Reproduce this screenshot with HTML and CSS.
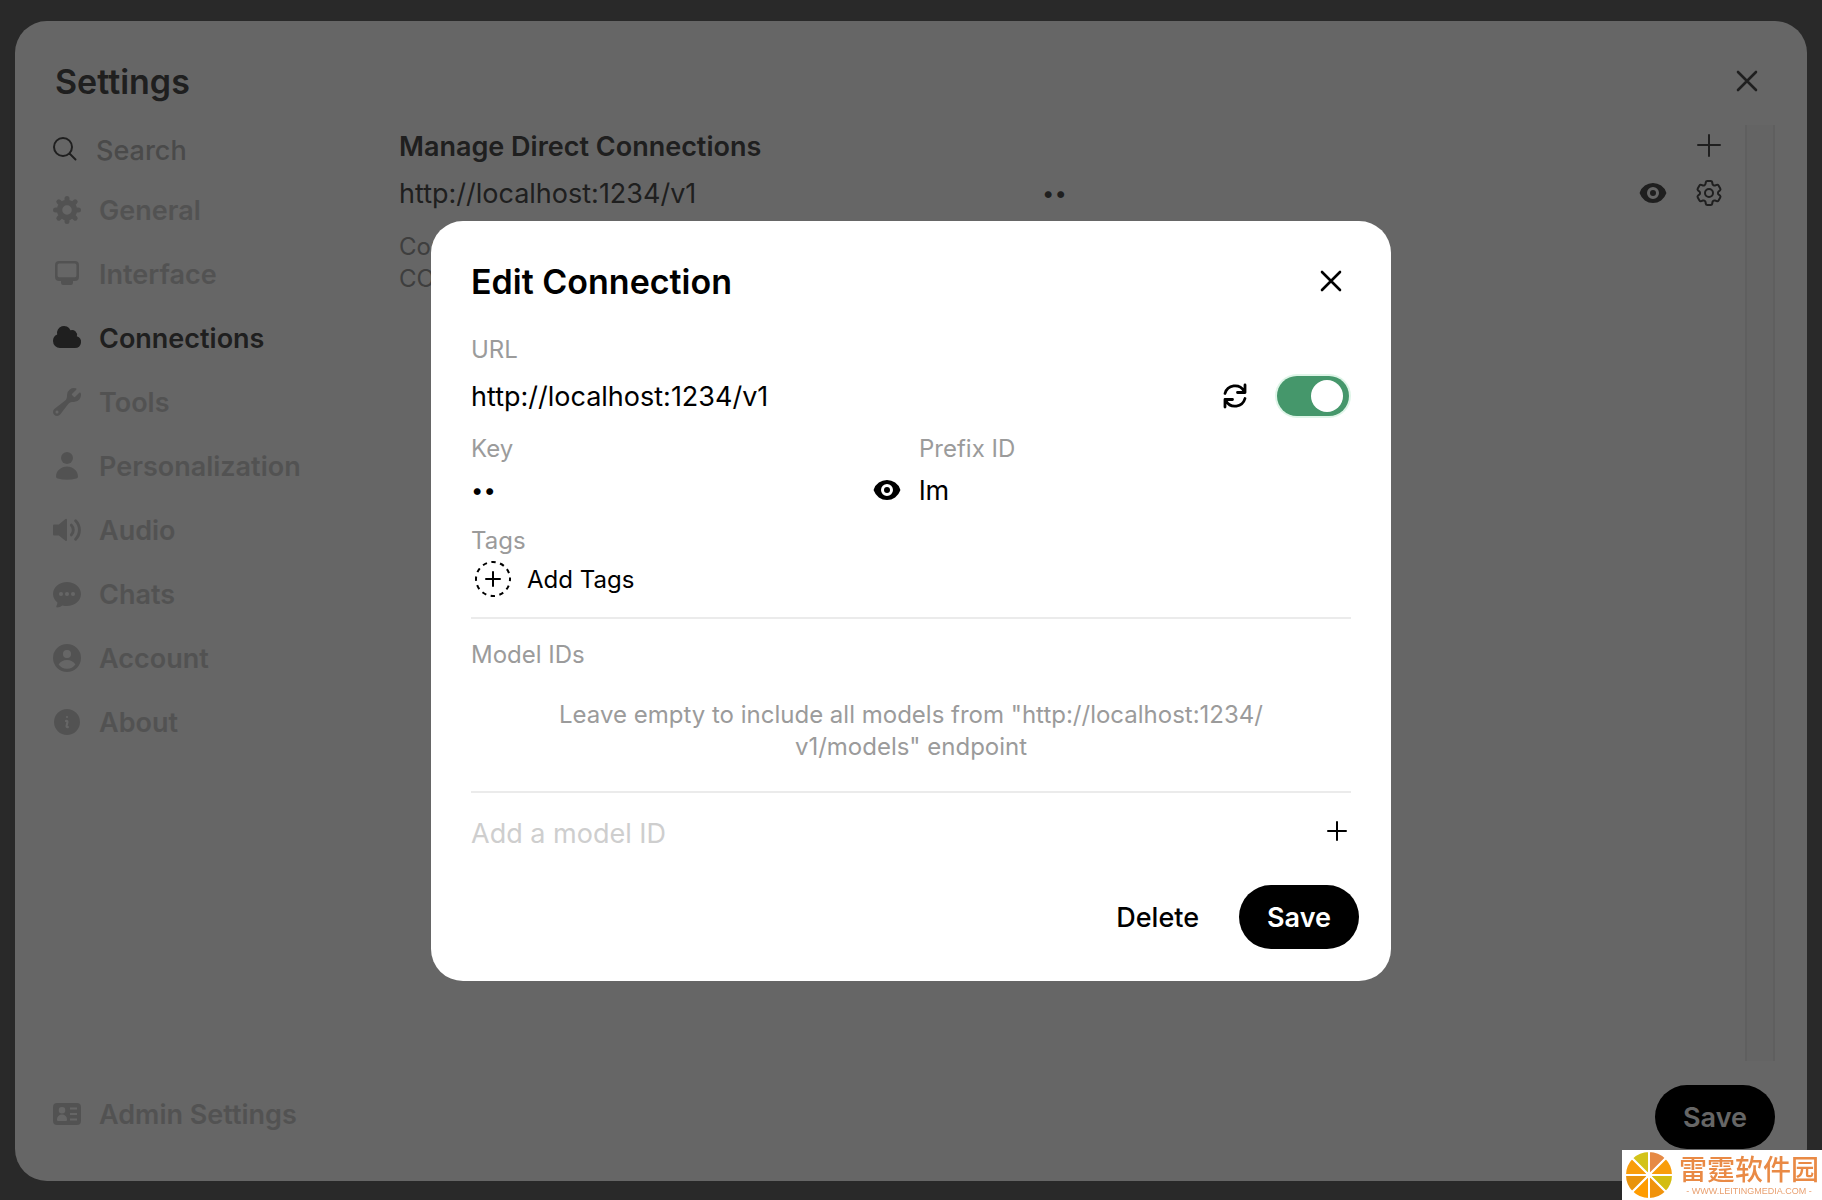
FILE: index.html
```
<!DOCTYPE html>
<html lang="en">
<head>
    <meta charset="UTF-8">
    <meta name="viewport" content="width=device-width, initial-scale=1.0">
    <title>Settings</title>
    <link rel="stylesheet" href="styles.css">
</head>
<body>

    <div class="settings">
        <header class="settings-header">
            <h1>Settings</h1>
            <button type="button" class="icon-button" aria-label="Close settings">
                <svg class="icon" viewBox="0 0 32 32"><path class="line-mid" d="M7 7l18 18M25 7L7 25"/></svg>
            </button>
        </header>

        <div class="settings-body">
            <nav class="sidebar">
                <label class="search">
                    <svg class="icon" viewBox="0 0 32 32"><circle class="line" cx="12" cy="13" r="9"/><path class="line" d="M18.5 19.5l6 6"/></svg>
                    <input type="text" placeholder="Search" aria-label="Search">
                </label>
                <button type="button" class="tab">
                    <svg class="icon" viewBox="0 0 32 32"><circle cx="16" cy="16" r="7.5" fill="none" stroke="currentColor" stroke-width="5.5"/><path d="M16 7.5V4.5M16 27.5v-3M7.5 16h-3M27.5 16h-3M10 10L7.8 7.8M24.2 24.2L22 22M10 22l-2.2 2.2M24.2 7.8L22 10" fill="none" stroke="currentColor" stroke-width="5" stroke-linecap="round"/></svg>
                    General
                </button>
                <button type="button" class="tab">
                    <svg class="icon" viewBox="0 0 16 16"><path fill-rule="evenodd" d="M4 1.5a2 2 0 0 0-2 2v6a2 2 0 0 0 2 2h1v1a1 1 0 0 0 1 1h4a1 1 0 0 0 1-1v-1h1a2 2 0 0 0 2-2v-6a2 2 0 0 0-2-2H4Zm-.7 2.1a.8.8 0 0 1 .8-.8h7.800a.8.8 0 0 1 .8.8v5.200a.8.8 0 0 1-.8.8H4.100a.8.8 0 0 1-.8-.8V3.600Z"/></svg>
                    Interface
                </button>
                <button type="button" class="tab active">
                    <svg class="icon" viewBox="0 0 16 16"><path d="M1 9.5A3.5 3.5 0 0 0 4.500 13H12a3 3 0 0 0 .917-5.857 2.503 2.503 0 0 0-3.198-3.019 3.5 3.5 0 0 0-6.628 2.171A3.5 3.5 0 0 0 1 9.5Z"/></svg>
                    Connections
                </button>
                <button type="button" class="tab">
                    <svg class="icon" viewBox="0 0 16 16"><path fill-rule="evenodd" d="M11.5 8a3.5 3.5 0 0 0 3.362-4.476c-.094-.325-.497-.39-.736-.15L12.099 5.4a.48.48 0 0 1-.653.033 8.554 8.554 0 0 1-.879-.879.48.48 0 0 1 .033-.653l2.027-2.028c.24-.239.175-.642-.15-.736a3.502 3.502 0 0 0-4.476 3.427c.018.99-.133 2.093-.914 2.7l-5.31 4.13a2.015 2.015 0 1 0 2.828 2.827l4.13-5.309c.607-.78 1.71-.932 2.7-.914L11.5 8ZM3 13.75a.75.75 0 1 0 0-1.5.75.75 0 0 0 0 1.5Z"/></svg>
                    Tools
                </button>
                <button type="button" class="tab">
                    <svg class="icon" viewBox="0 0 16 16"><circle cx="8" cy="4" r="3"/><path d="M8 8.2c-3 0-5.5 2.2-5.5 5 0 .5.3.9.8 1 3 .9 6.4.9 9.4 0 .5-.1.8-.5.8-1 0-2.8-2.5-5-5.5-5Z"/></svg>
                    Personalization
                </button>
                <button type="button" class="tab">
                    <svg class="icon" viewBox="0 0 16 16"><path d="M7.600 2.400A.5.5 0 0 1 8 3v10a.5.5 0 0 1-.8.4L3.900 10.800H1.500A.5.5 0 0 1 1 10.300V5.700a.5.5 0 0 1 .5-.5h2.400l3.300-2.700a.5.5 0 0 1 .4-.1Z"/><path d="M10.2 5.600a3.500 3.500 0 0 1 0 4.800M12.300 3.400a6.500 6.500 0 0 1 0 9.200" fill="none" stroke="currentColor" stroke-width="1.5" stroke-linecap="round"/></svg>
                    Audio
                </button>
                <button type="button" class="tab">
                    <svg class="icon" viewBox="0 0 16 16"><path fill-rule="evenodd" d="M8 2c3.9 0 7 2.600 7 6s-3.100 6-7 6c-.8 0-1.600-.1-2.300-.3-.7.600-1.700 1-2.700 1-.4 0-.5-.4-.3-.7.300-.5.500-1.100.5-1.700C1.900 11.200 1 9.700 1 8c0-3.400 3.100-6 7-6ZM5 7a1 1 0 1 0 0 2 1 1 0 0 0 0-2Zm3 0a1 1 0 1 0 0 2 1 1 0 0 0 0-2Zm3 0a1 1 0 1 0 0 2 1 1 0 0 0 0-2Z"/></svg>
                    Chats
                </button>
                <button type="button" class="tab">
                    <svg class="icon" viewBox="0 0 16 16"><path fill-rule="evenodd" d="M15 8A7 7 0 1 1 1 8a7 7 0 0 1 14 0Zm-5-2a2 2 0 1 1-4 0 2 2 0 0 1 4 0Zm-2 3a5 5 0 0 0-4.200 2.300A5.300 5.300 0 0 0 8 13.400a5.300 5.300 0 0 0 4.200-2.100A5 5 0 0 0 8 9Z"/></svg>
                    Account
                </button>
                <button type="button" class="tab">
                    <svg class="icon" viewBox="0 0 24 24"><path fill-rule="evenodd" d="M2.25 12a9.75 9.75 0 1 1 19.5 0 9.75 9.75 0 0 1-19.5 0Zm8.706-1.442c1.146-.573 2.437.463 2.126 1.706l-.709 2.836.042-.02a.75.75 0 0 1 .67 1.34l-.04.022c-1.147.573-2.438-.463-2.127-1.706l.71-2.836-.042.02a.75.75 0 1 1-.671-1.34l.041-.022ZM12 9a.75.75 0 1 0 0-1.5.75.75 0 0 0 0 1.5Z"/></svg>
                    About
                </button>
                <a href="#" class="tab admin-link">
                    <svg class="icon" viewBox="0 0 32 32"><path fill-rule="evenodd" d="M6 5h20a4 4 0 0 1 4 4v14a4 4 0 0 1-4 4H6a4 4 0 0 1-4-4V9a4 4 0 0 1 4-4Zm5 4a3 3 0 1 0 0 6.500A3 3 0 0 0 11 9ZM6 21.500c0 1 .6 1.500 1.500 1.500h7c1 0 1.500-.5 1.500-1.500a5 5 0 0 0-10 0ZM19 9.500v2h7v-2h-7Zm0 5.500v2h7v-2h-7Zm0 5.500v2h7v-2h-7Z"/></svg>
                    Admin Settings
                </a>
            </nav>

            <main class="content">
                <div class="panel-row">
                    <section class="panel">
                        <div class="panel-header">
                            <h2>Manage Direct Connections</h2>
                            <button type="button" class="icon-button" aria-label="Add connection">
                                <svg class="icon" viewBox="0 0 32 32"><path class="line" d="M16 5v21M5 15h22"/></svg>
                            </button>
                        </div>
                        <div class="connection">
                            <input type="text" value="http://localhost:1234/v1" aria-label="Connection URL">
                            <div class="secret">
                                <input type="password" value="lm" aria-label="Connection key">
                                <button type="button" class="icon-button" aria-label="Show key">
                                    <svg class="icon" viewBox="0 0 16 16"><path d="M8 9.5a1.5 1.5 0 1 0 0-3 1.5 1.5 0 0 0 0 3Z"/><path fill-rule="evenodd" d="M1.38 8.28a.87.87 0 0 1 0-.566 7.003 7.003 0 0 1 13.238.006.87.87 0 0 1 0 .566A7.003 7.003 0 0 1 1.379 8.28ZM11 8a3 3 0 1 1-6 0 3 3 0 0 1 6 0Z"/></svg>
                                </button>
                            </div>
                            <button type="button" class="icon-button" aria-label="Configure connection">
                                <svg class="icon" viewBox="0 0 24 24" fill="none" stroke="currentColor" stroke-width="1.5" stroke-linecap="round" stroke-linejoin="round"><path d="M9.594 3.94c.09-.542.56-.94 1.11-.94h2.593c.55 0 1.02.398 1.11.94l.213 1.281c.063.374.313.686.645.87.074.04.147.083.22.127.325.196.72.257 1.075.124l1.217-.456a1.125 1.125 0 0 1 1.37.49l1.296 2.247a1.125 1.125 0 0 1-.26 1.431l-1.003.827c-.293.241-.438.613-.43.992a7.723 7.723 0 0 1 0 .255c-.008.378.137.75.43.991l1.004.827c.424.35.534.955.26 1.43l-1.298 2.247a1.125 1.125 0 0 1-1.369.491l-1.217-.456c-.355-.133-.75-.072-1.076.124a6.47 6.47 0 0 1-.22.128c-.331.183-.581.495-.644.869l-.213 1.281c-.09.543-.56.94-1.11.94h-2.594c-.55 0-1.019-.398-1.11-.94l-.213-1.281c-.062-.374-.312-.686-.644-.87a6.52 6.52 0 0 1-.22-.127c-.325-.196-.72-.257-1.076-.124l-1.217.456a1.125 1.125 0 0 1-1.369-.49l-1.297-2.247a1.125 1.125 0 0 1 .26-1.431l1.004-.827c.292-.24.437-.613.43-.991a6.932 6.932 0 0 1 0-.255c.007-.38-.138-.751-.43-.992l-1.004-.827a1.125 1.125 0 0 1-.26-1.43l1.297-2.247a1.125 1.125 0 0 1 1.37-.491l1.216.456c.356.133.751.072 1.076-.124.072-.044.146-.086.22-.128.332-.183.582-.495.644-.869l.214-1.28Z"/><path d="M15 12a3 3 0 1 1-6 0 3 3 0 0 1 6 0Z"/></svg>
                            </button>
                        </div>
                        <p class="note">Connect to your own OpenAI compatible API endpoints.<br>CORS must be properly configured by the provider to allow requests.</p>
                    </section>
                    <div class="scroll-track"></div>
                </div>
                <button type="button" class="save-button">Save</button>
            </main>
        </div>
    </div>

    <div class="overlay">
        <form class="modal" role="dialog" aria-labelledby="modalTitle">
            <header class="modal-header">
                <h2 id="modalTitle">Edit Connection</h2>
                <button type="button" class="icon-button" aria-label="Close">
                    <svg class="icon" viewBox="0 0 32 32"><path class="line-mid" d="M7 7l18 18M25 7L7 25"/></svg>
                </button>
            </header>

            <div class="modal-body">
                <label class="field-label" for="url">URL</label>
                <div class="url-row">
                    <input type="text" id="url" value="http://localhost:1234/v1">
                    <button type="button" class="icon-button" aria-label="Verify connection">
                        <svg class="icon" viewBox="0 0 32 32"><path class="line-bold" d="M6 13.5a10.400 10.400 0 0 1 19-2.500M26 5v7.500h-7.500M26 18.500A10.400 10.400 0 0 1 7 21M6 27v-7.500h7.500"/></svg>
                    </button>
                    <input type="checkbox" class="toggle" aria-label="Enabled" checked>
                </div>

                <div class="columns">
                    <div>
                        <label class="field-label" for="key">Key</label>
                        <div class="secret">
                            <input type="password" id="key" value="lm">
                            <button type="button" class="icon-button" aria-label="Show key">
                                <svg class="icon" viewBox="0 0 16 16"><path d="M8 9.5a1.5 1.5 0 1 0 0-3 1.5 1.5 0 0 0 0 3Z"/><path fill-rule="evenodd" d="M1.38 8.28a.87.87 0 0 1 0-.566 7.003 7.003 0 0 1 13.238.006.87.87 0 0 1 0 .566A7.003 7.003 0 0 1 1.379 8.28ZM11 8a3 3 0 1 1-6 0 3 3 0 0 1 6 0Z"/></svg>
                            </button>
                        </div>
                    </div>
                    <div>
                        <label class="field-label" for="prefix">Prefix ID</label>
                        <input type="text" id="prefix" value="lm">
                    </div>
                </div>

                <div class="field-label">Tags</div>
                <button type="button" class="add-tags">
                    <svg class="tag-icon" viewBox="0 0 36 36"><circle cx="18" cy="18" r="17" fill="none" stroke="currentColor" stroke-width="2" stroke-dasharray="4.450" stroke-dashoffset="2.200"/><path class="line" d="M18 11v14M11 18h14"/></svg>
                    Add Tags
                </button>

                <hr>

                <div class="field-label">Model IDs</div>
                <p class="hint">Leave empty to include all models from "http://localhost:1234/<wbr>v1/models" endpoint</p>

                <hr>

                <div class="model-row">
                    <input type="text" placeholder="Add a model ID" aria-label="Add a model ID">
                    <button type="button" class="icon-button" aria-label="Add model">
                        <svg class="icon" viewBox="0 0 32 32"><path class="line" d="M18 5v18M9 14h18"/></svg>
                    </button>
                </div>
            </div>

            <footer class="modal-footer">
                <button type="button" class="delete-button">Delete</button>
                <button type="submit" class="save-button">Save</button>
            </footer>
        </form>
    </div>

    <div class="watermark">
        <svg class="watermark-logo" viewBox="-24 -24 48 48">
            <g stroke="#fff" stroke-width="2">
                <path d="M0 0V-24A24 24 0 0 1 17-17Z" fill="#e68a45"/>
                <path d="M0 0L17-17A24 24 0 0 1 24 0Z" fill="#f99d0a"/>
                <path d="M0 0H24A24 24 0 0 1 17 17Z" fill="#d3bd10"/>
                <path d="M0 0L17 17A24 24 0 0 1 0 24Z" fill="#f0930c"/>
                <path d="M0 0V24A24 24 0 0 1-17 17Z" fill="#ff9c00"/>
                <path d="M0 0L-17 17A24 24 0 0 1-24 0Z" fill="#e8930c"/>
                <path d="M0 0H-24A24 24 0 0 1-17-17Z" fill="#f99d0a"/>
                <path d="M0 0L-17-17A24 24 0 0 1 0-24Z" fill="#d3c31a"/>
            </g>
            <circle r="3" fill="#fff"/>
        </svg>
        <div class="watermark-text">
            <span class="watermark-name" lang="zh-CN">雷霆软件园</span>
            <span class="watermark-url">- WWW.LEITINGMEDIA.COM -</span>
        </div>
    </div>

</body>
</html>
```
FILE: styles.css
```
* {
    box-sizing: border-box;
}

body {
    margin: 0;
    font-family: Inter, "Liberation Sans", sans-serif;
    font-size: 27px;
    background-color: #666;
}

h1,
h2,
p {
    margin: 0;
}

button,
input {
    font: inherit;
    color: inherit;
    background: none;
    border: none;
    padding: 0;
    margin: 0;
}

button {
    cursor: pointer;
}

input[type="text"],
input[type="password"] {
    width: 100%;
    min-width: 0;
    height: 40px;
    outline: none;
}

input[type="password"] {
    font-size: 22px;
}

.icon {
    display: block;
    width: 32px;
    height: 32px;
    flex-shrink: 0;
    fill: currentColor;
}

.icon[fill="none"] {
    fill: none;
}

.icon-button {
    flex-shrink: 0;
}

.line,
.line-mid,
.line-bold {
    fill: none;
    stroke: currentColor;
    stroke-width: 2;
    stroke-linecap: round;
    stroke-linejoin: round;
}

.line-mid {
    stroke-width: 2.6;
}

.line-bold {
    stroke-width: 2.8;
}

/* Settings window */
.settings {
    display: flex;
    flex-direction: column;
    min-height: calc(100vh - 40px);
    margin: 21px 15px 19px;
    padding: 40px 32px 32px 36px;
    background-color: #fff;
    border-radius: 32px;
    color: #4e4e4e;
}

.settings-header {
    display: flex;
    justify-content: space-between;
    align-items: center;
    height: 40px;
    margin-bottom: 24px;
    padding: 0 12px 0 4px;
}

.settings-header h1 {
    font-size: 34px;
    font-weight: 600;
}

.settings-body {
    display: flex;
    flex: 1;
}

.sidebar {
    display: flex;
    flex-direction: column;
    width: 348px;
    padding-bottom: 3px;
    flex-shrink: 0;
}

.search {
    display: flex;
    align-items: center;
    gap: 13px;
    height: 50px;
    margin-bottom: 3px;
    font-weight: 500;
}

.search input::placeholder {
    color: #b9b9b9;
    opacity: 1;
}

.tab {
    display: flex;
    align-items: center;
    gap: 16px;
    height: 64px;
    font-weight: 600;
    color: #cecece;
    text-align: left;
    text-decoration: none;
}

.tab.active {
    color: #4e4e4e;
}

.admin-link {
    margin-top: auto;
}

.content {
    display: flex;
    flex-direction: column;
    flex: 1;
    min-width: 0;
}

.panel-row {
    display: flex;
    flex: 1;
    gap: 20px;
    margin-bottom: 24px;
}

.panel {
    flex: 1;
    min-width: 0;
}

.panel-header {
    display: flex;
    justify-content: space-between;
    align-items: center;
    height: 42px;
}

.panel-header h2 {
    font-size: 27px;
    font-weight: 600;
}

.connection {
    display: grid;
    grid-template-columns: 1fr 1fr auto;
    column-gap: 16px;
    align-items: center;
    margin: 6px 0 18px;
}

.connection > .icon-button {
    margin-left: 8px;
}

.secret {
    display: flex;
    align-items: center;
}

.note {
    font-size: 24px;
    line-height: 32px;
    color: #9b9b9b;
}

.scroll-track {
    width: 30px;
    background-color: #fafafa;
    border: solid #ededed;
    border-width: 0 2px;
}

.save-button {
    align-self: flex-end;
    height: 64px;
    padding: 0 28px;
    border-radius: 32px;
    background-color: #000;
    color: #fff;
    font-weight: 600;
}

/* Edit connection dialog */
.overlay {
    position: fixed;
    inset: 0;
    display: flex;
    justify-content: center;
    align-items: center;
    padding-top: 2px;
    background-color: rgba(0, 0, 0, 0.6);
}

.modal {
    width: 100%;
    max-width: 960px;
    background-color: #fff;
    border-radius: 32px;
    color: #000;
}

.modal-header {
    display: flex;
    justify-content: space-between;
    align-items: center;
    height: 120px;
    padding: 0 44px 0 40px;
}

.modal-header h2 {
    font-size: 34px;
    font-weight: 600;
}

.modal-body {
    margin-top: -7px;
    padding: 0 40px;
}

.field-label {
    display: block;
    font-size: 24px;
    line-height: 32px;
    color: #9b9b9b;
}

.url-row {
    display: flex;
    align-items: center;
    gap: 26px;
    margin: 10px 0 17px;
    padding-right: 2px;
}

.toggle {
    appearance: none;
    display: flex;
    align-items: center;
    justify-content: flex-end;
    width: 72px;
    height: 40px;
    padding: 0 6px;
    border-radius: 20px;
    background-color: #45976b;
    box-shadow: 0 0 0 2px #dff5e8;
    flex-shrink: 0;
    cursor: pointer;
}

.toggle::before {
    content: "";
    width: 32px;
    height: 32px;
    border-radius: 50%;
    background-color: #fff;
}

.toggle:not(:checked) {
    justify-content: flex-start;
    background-color: #cecece;
}

.columns {
    display: grid;
    grid-template-columns: 1fr 1fr;
    gap: 16px;
    margin-bottom: 15px;
}

.columns .field-label {
    margin-bottom: 5px;
}

.add-tags {
    display: flex;
    align-items: center;
    gap: 16px;
    margin-top: 4px;
    padding-left: 4px;
    font-size: 24px;
}

.tag-icon {
    width: 36px;
    height: 36px;
}

hr {
    height: 2px;
    margin: 20px 0;
    border: none;
    background-color: #ebebeb;
}

.hint {
    padding: 28px 80px 8px;
    font-size: 24px;
    line-height: 32px;
    text-align: center;
    color: #9b9b9b;
}

.model-row {
    display: flex;
    align-items: center;
}

.model-row input::placeholder {
    color: #cecece;
    opacity: 1;
}

.modal-footer {
    display: flex;
    justify-content: flex-end;
    gap: 40px;
    padding: 32px;
}

.delete-button {
    font-weight: 500;
}

/* Corner badge */
.watermark {
    position: fixed;
    right: 0;
    bottom: 0;
    display: flex;
    align-items: center;
    gap: 6px;
    height: 50px;
    padding: 0 3px;
    background-color: #fff;
}

.watermark-logo {
    width: 48px;
    height: 48px;
}

.watermark-text {
    display: flex;
    flex-direction: column;
    align-items: center;
}

.watermark-name {
    font-family: "Noto Sans CJK SC", sans-serif;
    font-size: 28px;
    font-weight: 500;
    line-height: 32px;
    color: #e98a45;
}

.watermark-url {
    font-family: "Liberation Sans", sans-serif;
    font-size: 9px;
    line-height: 14px;
    color: #e9a070;
}
```
